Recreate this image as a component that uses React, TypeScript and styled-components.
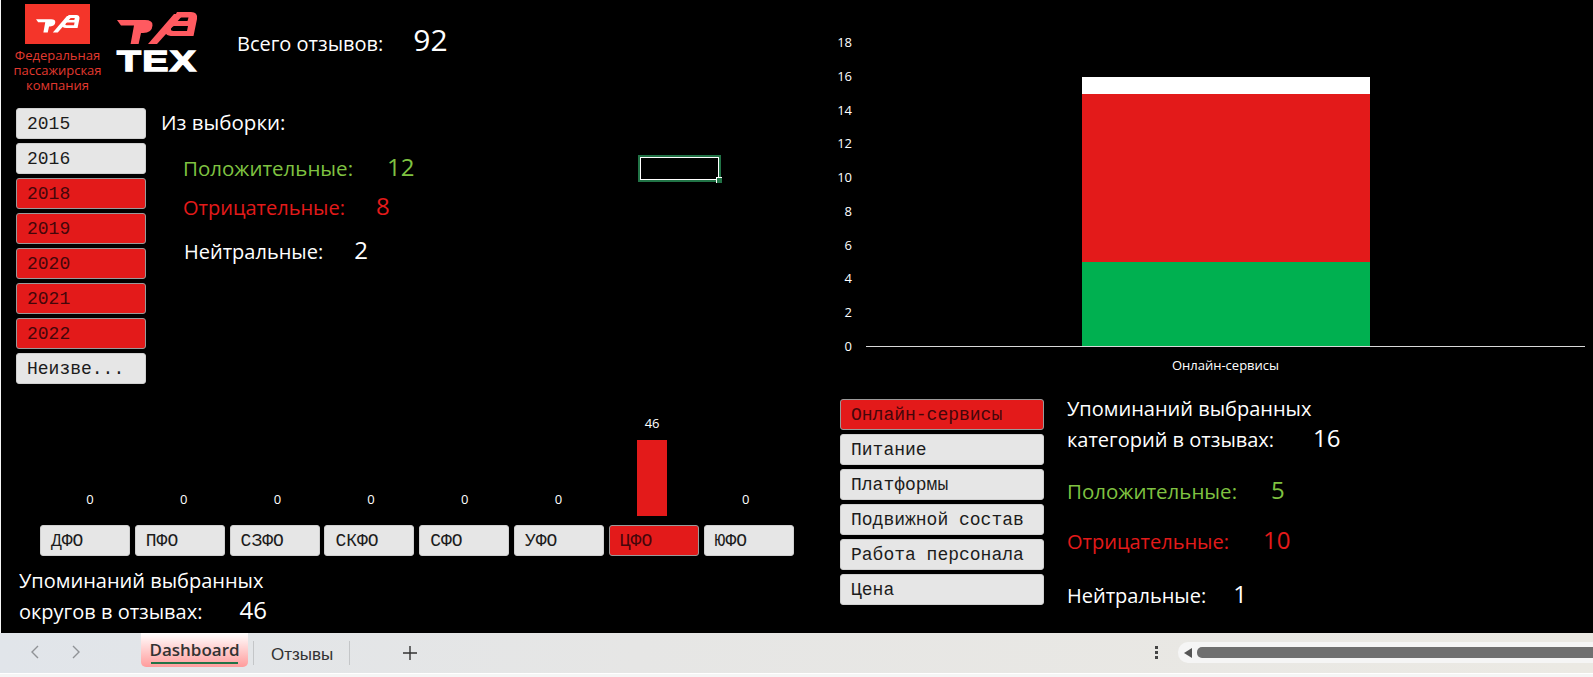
import React from 'react';
import styled, { createGlobalStyle } from 'styled-components';

const years = [
  { label: '2015', active: false },
  { label: '2016', active: false },
  { label: '2018', active: true },
  { label: '2019', active: true },
  { label: '2020', active: true },
  { label: '2021', active: true },
  { label: '2022', active: true },
  { label: 'Неизве...', active: false },
];

const districts = [
  { label: 'ДФО', value: 0 },
  { label: 'ПФО', value: 0 },
  { label: 'СЗФО', value: 0 },
  { label: 'СКФО', value: 0 },
  { label: 'СФО', value: 0 },
  { label: 'УФО', value: 0 },
  { label: 'ЦФО', value: 46 },
  { label: 'ЮФО', value: 0 },
];

const categories = [
  { label: 'Онлайн-сервисы', active: true },
  { label: 'Питание', active: false },
  { label: 'Платформы', active: false },
  { label: 'Подвижной состав', active: false },
  { label: 'Работа персонала', active: false },
  { label: 'Цена', active: false },
];

const ticks = [18, 16, 14, 12, 10, 8, 6, 4, 2, 0];

const GlobalStyle = createGlobalStyle`
  html, body {
    margin: 0;
    padding: 0;
    background: #f6f6f6;
  }
  body {
    font-family: "Open Sans", "Liberation Sans", sans-serif;
  }
`;

const Page = styled.div`
  width: 1593px;
  height: 677px;
  overflow: hidden;
  display: flex;
  flex-direction: column;
`;

const Sheet = styled.div`
  position: relative;
  height: 633px;
  margin-left: 1px;
  background: #000;
  display: grid;
  grid-template-columns: 839px 1fr;
`;

const LeftColumn = styled.div`
  display: flex;
  flex-direction: column;
`;

const Header = styled.div`
  height: 108px;
  display: flex;
  align-items: flex-start;
`;

const CompanyLogo = styled.div`
  width: 91px;
  margin: 4px 0 0 11px;
  display: flex;
  flex-direction: column;
  align-items: center;
  color: #e2392f;
  font-size: 13px;
  line-height: 15px;
  text-align: center;
  white-space: nowrap;
`;

const LogoSquare = styled.div`
  width: 65px;
  height: 40px;
  margin-bottom: 4px;
  background: #f4352a;
  display: flex;
  align-items: center;
  justify-content: center;
`;

const TexLogo = styled.div`
  width: 81px;
  margin: 12px 0 0 14px;
  display: flex;
  flex-direction: column;
  gap: 6px;
`;

const TexWord = styled.div`
  color: #fff;
  font-family: "Liberation Sans", sans-serif;
  font-weight: 700;
  font-size: 29px;
  line-height: 22px;
  letter-spacing: 1px;
  -webkit-text-stroke: 1.4px #fff;
  transform: scaleX(1.35);
  transform-origin: left center;
`;

const TotalRow = styled.div`
  margin: 19px 0 0 39px;
  display: flex;
  align-items: baseline;
  color: #fff;
`;

const Label = styled.span<{ $tone?: 'green' | 'red' | 'white'; $size?: number }>`
  font-size: ${(p) => p.$size ?? 20}px;
  color: ${(p) => (p.$tone === 'green' ? '#7fc241' : p.$tone === 'red' ? '#e31a1a' : '#fff')};
  white-space: nowrap;
`;

const Value = styled(Label)<{ $gap: number }>`
  margin-left: ${(p) => p.$gap}px;
`;

const MiddleRow = styled.div`
  height: 292px;
  display: flex;
`;

const ButtonStack = styled.div<{ $width: number }>`
  width: ${(p) => p.$width}px;
  display: flex;
  flex-direction: column;
  gap: 4px;
  flex-shrink: 0;
`;

const YearStack = styled(ButtonStack)`
  margin-left: 15px;
`;

const FilterButton = styled.button<{ $active?: boolean }>`
  height: 31px;
  padding: 0 0 0 10px;
  box-sizing: border-box;
  border: 1px solid ${(p) => (p.$active ? '#9a9a9a' : '#d0d0d0')};
  border-radius: 3px;
  background: ${(p) => (p.$active ? '#e31a1a' : '#e6e6e6')};
  color: ${(p) => (p.$active ? '#45060a' : '#1c1c1c')};
  font-family: "Liberation Mono", monospace;
  font-size: 18px;
  text-align: left;
  white-space: nowrap;
  overflow: hidden;
`;

const Summary = styled.div`
  margin-left: 15px;
  display: flex;
  flex-direction: column;
`;

const SummaryTitle = styled.div`
  height: 28px;
  line-height: 28px;
  color: #fff;
  font-size: 20.5px;
`;

const StatRow = styled.div<{ $top: number; $left: number }>`
  margin-top: ${(p) => p.$top}px;
  margin-left: ${(p) => p.$left}px;
  height: 28px;
  display: flex;
  align-items: baseline;
`;

const DistrictChart = styled.div`
  height: 125px;
  margin-left: 44px;
  display: flex;
  gap: 3.7px;
`;

const DistrictColumn = styled.div`
  width: 90px;
  display: flex;
  flex-direction: column;
  justify-content: flex-end;
  align-items: center;
`;

const DistrictValue = styled.span`
  color: #fff;
  font-size: 13px;
  line-height: 16px;
  margin-bottom: 9px;
`;

const DistrictBar = styled.div`
  width: 30px;
  background: #e31a1a;
  margin-bottom: 9px;
`;

const DistrictButtons = styled.div`
  margin-left: 39px;
  display: flex;
  gap: 4.8px;
`;

const DistrictButton = styled(FilterButton)`
  width: 90px;
`;

const MentionBlock = styled.div`
  margin: 10px 0 0 18px;
`;

const MentionLine = styled.div`
  height: 29px;
  line-height: 29px;
  display: flex;
  align-items: baseline;
`;

const RightColumn = styled.div`
  display: flex;
  flex-direction: column;
`;

const ChartArea = styled.div`
  height: 399px;
  display: flex;
  align-items: flex-start;
`;

const Axis = styled.div`
  width: 16px;
  margin: 33px 0 0 -4px;
  display: flex;
  flex-direction: column;
`;

const Tick = styled.span`
  height: 33.75px;
  line-height: 18px;
  color: #fff;
  font-size: 13px;
  text-align: right;
`;

const Plot = styled.div`
  width: 719px;
  margin: 42px 0 0 14px;
  display: flex;
  flex-direction: column;
  align-items: center;
`;

const Stack = styled.div`
  height: 304px;
  width: 288px;
  display: flex;
  flex-direction: column;
  justify-content: flex-end;
`;

const Segment = styled.div<{ $color: string }>`
  background: ${(p) => p.$color};
`;

const AxisLine = styled.div`
  width: 100%;
  height: 1px;
  background: #d9d9d9;
`;

const AxisCaption = styled.div`
  margin-top: 9px;
  color: #fff;
  font-size: 13px;
`;

const BottomRow = styled.div`
  display: flex;
`;

const CategoryStats = styled.div`
  margin: -5px 0 0 23px;
  display: flex;
  flex-direction: column;
`;

const TabBar = styled.div`
  height: 40px;
  box-sizing: border-box;
  background: linear-gradient(90deg, #e1e5ea 0%, #e6e6e5 40%, #ebe9e3 100%);
  display: flex;
  align-items: flex-start;
`;

const BarFooter = styled.div`
  height: 4px;
  box-sizing: border-box;
  border-top: 1px solid #fff;
  background: #f5f5f5;
`;

const NavIcons = styled.div`
  width: 141px;
  height: 38px;
  padding-left: 28px;
  box-sizing: border-box;
  display: flex;
  align-items: center;
  gap: 27px;
`;

const ActiveTab = styled.div`
  position: relative;
  width: 107px;
  height: 34px;
  box-sizing: border-box;
  padding-top: 6px;
  text-align: center;
  background: linear-gradient(180deg, #fff 0%, #ff9c9c 100%);
  border-radius: 0 0 5px 5px;
  color: #333;
  font-size: 17px;
  line-height: 22px;
  font-weight: 600;
`;

const TabUnderline = styled.div`
  position: absolute;
  left: 10px;
  right: 10px;
  bottom: 3px;
  height: 2px;
  background: #217346;
`;

const TabSep = styled.div<{ $left: number }>`
  width: 1px;
  height: 24px;
  margin: 8px 0 0 ${(p) => p.$left}px;
  background: #c4c6c8;
`;

const Tab = styled.div`
  margin: 11px 0 0 17px;
  width: 78px;
  color: #333;
  font-family: "Liberation Sans", sans-serif;
  font-size: 17px;
  line-height: 22px;
`;

const PlusButton = styled.div`
  margin: 12px 0 0 52px;
  display: flex;
`;

const Dots = styled.div`
  margin: 13px 0 0 737px;
  width: 4px;
  height: 13px;
  display: flex;
  flex-direction: column;
  justify-content: space-between;
`;

const Dot = styled.span`
  width: 3px;
  height: 3px;
  background: #444;
`;

const ScrollTrack = styled.div`
  margin: 9px 0 0 19px;
  flex: 1;
  height: 21px;
  border-radius: 10px 0 0 10px;
  background: #f5f5f5;
  display: flex;
  align-items: center;
  padding-left: 6px;
  gap: 5px;
`;

const ScrollArrow = styled.div`
  width: 0;
  height: 0;
  border-top: 5px solid transparent;
  border-bottom: 5px solid transparent;
  border-right: 8px solid #555;
`;

const ScrollThumb = styled.div`
  flex: 1;
  height: 11px;
  border-radius: 5px 0 0 5px;
  background: #6f6f6f;
`;

const CellCursor = styled.div`
  position: absolute;
  left: 637px;
  top: 155px;
  width: 83px;
  height: 27px;
  box-sizing: border-box;
  border: 2px solid #217346;
  outline: 1px solid #fff;
  outline-offset: -3px;
`;

const CellHandle = styled.div`
  position: absolute;
  right: -3px;
  bottom: -3px;
  width: 5px;
  height: 5px;
  border: 1px solid #fff;
  border-width: 1px 0 0 1px;
  background: #217346;
`;

const RzdMark = ({ width, color }: { width: number; color: string }) => (
  <svg width={width} viewBox="0 0 81 32" fill={color} style={{ display: 'block' }}>
    {/* "р": long top band with a slanted stem and a closed bowl */}
    <path d="M0 8 H28 Q36 8 35.5 13.5 Q35 21 26 21 H24 L21.6 32 H13.6 L17 13.5 H4 Z" />
    {/* slash */}
    <path d="M31 32 L57 2 H67 L40 32 Z" />
    {/* "д": top arc, right side and hollow bowl */}
    <path
      fillRule="evenodd"
      d="M60 0 H74 Q81 0 80 7 L76.5 24 H56 Q46 24 48.5 16 Q51 9 60 9 H70.5 L71.5 5.5 H57 Z M57.5 14 Q54.5 14 54 16.5 Q53.5 19 56.5 19 H70 L71 14 Z"
    />
  </svg>
);

const Chevron = ({ dir }: { dir: 'left' | 'right' }) => (
  <svg width="14" height="16" viewBox="0 0 14 16" fill="none" stroke="#8f9296" strokeWidth="1.4">
    <path d={dir === 'left' ? 'M10 2 L4 8 L10 14' : 'M4 2 L10 8 L4 14'} />
  </svg>
);

const App = () => (
  <Page>
    <GlobalStyle />
    <Sheet>
      <LeftColumn>
        <Header>
          <CompanyLogo>
            <LogoSquare>
              <RzdMark width={44} color="#fff" />
            </LogoSquare>
            Федеральная
            <br />
            пассажирская
            <br />
            компания
          </CompanyLogo>
          <TexLogo>
            <RzdMark width={81} color="#ff5a60" />
            <TexWord>ТЕХ</TexWord>
          </TexLogo>
          <TotalRow>
            <Label>Всего отзывов:</Label>
            <Value $size={30} $gap={30}>
              92
            </Value>
          </TotalRow>
        </Header>

        <MiddleRow>
          <YearStack $width={130}>
            {years.map(({ label, active }) => (
              <FilterButton key={label} $active={active}>
                {label}
              </FilterButton>
            ))}
          </YearStack>
          <Summary>
            <SummaryTitle>Из выборки:</SummaryTitle>
            <StatRow $top={14} $left={22}>
              <Label $tone="green" $size={20.5}>
                Положительные:
              </Label>
              <Value $tone="green" $size={24} $gap={34}>
                12
              </Value>
            </StatRow>
            <StatRow $top={11} $left={22}>
              <Label $tone="red">Отрицательные:</Label>
              <Value $tone="red" $size={24} $gap={31}>
                8
              </Value>
            </StatRow>
            <StatRow $top={16} $left={23}>
              <Label>Нейтральные:</Label>
              <Value $size={24} $gap={31}>
                2
              </Value>
            </StatRow>
          </Summary>
        </MiddleRow>

        <DistrictChart>
          {districts.map(({ label, value }) => (
            <DistrictColumn key={label}>
              <DistrictValue>{value}</DistrictValue>
              <DistrictBar style={{ height: value * 1.65 }} />
            </DistrictColumn>
          ))}
        </DistrictChart>
        <DistrictButtons>
          {districts.map(({ label, value }) => (
            <DistrictButton key={label} $active={value > 0}>
              {label}
            </DistrictButton>
          ))}
        </DistrictButtons>
        <MentionBlock>
          <MentionLine>
            <Label>Упоминаний выбранных</Label>
          </MentionLine>
          <MentionLine>
            <Label>округов в отзывах:</Label>
            <Value $size={24} $gap={37}>
              46
            </Value>
          </MentionLine>
        </MentionBlock>
      </LeftColumn>

      <RightColumn>
        <ChartArea>
          <Axis>
            {ticks.map((tick) => (
              <Tick key={tick}>{tick}</Tick>
            ))}
          </Axis>
          <Plot>
            <Stack>
              <Segment $color="#fff" style={{ height: 17 }} />
              <Segment $color="#e31a1a" style={{ height: 168 }} />
              <Segment $color="#00b050" style={{ height: 84 }} />
            </Stack>
            <AxisLine />
            <AxisCaption>Онлайн-сервисы</AxisCaption>
          </Plot>
        </ChartArea>
        <BottomRow>
          <ButtonStack $width={204}>
            {categories.map(({ label, active }) => (
              <FilterButton key={label} $active={active}>
                {label}
              </FilterButton>
            ))}
          </ButtonStack>
          <CategoryStats>
            <MentionLine>
              <Label>Упоминаний выбранных</Label>
            </MentionLine>
            <MentionLine>
              <Label>категорий в отзывах:</Label>
              <Value $size={24} $gap={39}>
                16
              </Value>
            </MentionLine>
            <StatRow $top={21} $left={0}>
              <Label $tone="green" $size={20.5}>
                Положительные:
              </Label>
              <Value $tone="green" $size={24} $gap={34}>
                5
              </Value>
            </StatRow>
            <StatRow $top={22} $left={0}>
              <Label $tone="red">Отрицательные:</Label>
              <Value $tone="red" $size={24} $gap={34}>
                10
              </Value>
            </StatRow>
            <StatRow $top={26} $left={0}>
              <Label>Нейтральные:</Label>
              <Value $size={24} $gap={27}>
                1
              </Value>
            </StatRow>
          </CategoryStats>
        </BottomRow>
      </RightColumn>

      <CellCursor>
        <CellHandle />
      </CellCursor>
    </Sheet>

    <TabBar>
      <NavIcons>
        <Chevron dir="left" />
        <Chevron dir="right" />
      </NavIcons>
      <ActiveTab>
        Dashboard
        <TabUnderline />
      </ActiveTab>
      <TabSep $left={5} />
      <Tab>Отзывы</Tab>
      <TabSep $left={0} />
      <PlusButton>
        <svg width="16" height="16" viewBox="0 0 16 16" stroke="#333" strokeWidth="1.4">
          <path d="M8 1 V15 M1 8 H15" />
        </svg>
      </PlusButton>
      <Dots>
        <Dot />
        <Dot />
        <Dot />
      </Dots>
      <ScrollTrack>
        <ScrollArrow />
        <ScrollThumb />
      </ScrollTrack>
    </TabBar>
    <BarFooter />
  </Page>
);

export default App;
